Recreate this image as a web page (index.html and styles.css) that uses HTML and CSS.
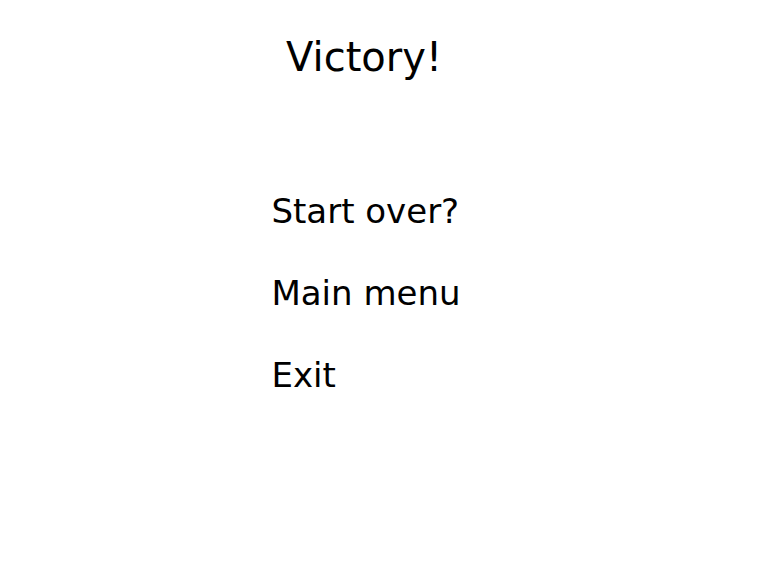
FILE: index.html
```html
<!DOCTYPE html>
<html lang="en">
<head>
<meta charset="utf-8">
<title>Victory!</title>
<link rel="stylesheet" href="styles.css">
</head>
<body>
<main class="screen">
<h1 class="title">Victory!</h1>
<nav class="menu">
<button class="item" type="button">Start over?</button>
<button class="item" type="button">Main menu</button>
<button class="item" type="button">Exit</button>
</nav>
</main>
</body>
</html>
```
FILE: styles.css
```css
body {
  margin: 0;
  background: #fff;
  color: #000;
  font-family: "DejaVu Sans", sans-serif;
}

.screen {
  display: flex;
  flex-direction: column;
  align-items: center;
  gap: 110px;
  padding: 33px 36px 32px 0;
}

.title {
  margin: 0;
  padding-right: 4px;
  font-size: 40px;
  font-weight: 400;
  line-height: 48px;
}

.menu {
  display: flex;
  flex-direction: column;
  align-items: flex-start;
  gap: 42px;
}

.item {
  padding: 0;
  border: 0;
  background: none;
  color: inherit;
  font: inherit;
  font-size: 34px;
  line-height: 40px;
  cursor: pointer;
}
```
